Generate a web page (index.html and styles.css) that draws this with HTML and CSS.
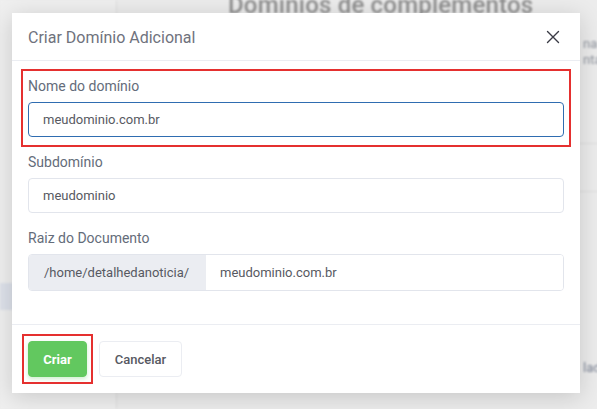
FILE: index.html
```html
<!DOCTYPE html>
<html lang="pt-BR">
<head>
<meta charset="utf-8">
<title>Criar Domínio Adicional</title>
<link rel="stylesheet" href="styles.css">
</head>
<body>
<div class="page" aria-hidden="true">
  <aside class="side">
    <div class="side-item"></div>
  </aside>
  <main class="main">
    <h1 class="page-title">Domínios de complementos</h1>
    <p class="page-text">na<br>nta</p>
    <div class="page-rule r1"></div>
    <div class="page-rule r2"></div>
    <p class="page-text low">lad</p>
  </main>
</div>

<div class="modal">
  <div class="modal-header">
    <h2 class="modal-title">Criar Domínio Adicional</h2>
    <button class="close" type="button" aria-label="Fechar">
      <svg width="14" height="14" viewBox="0 0 14 14"><path d="M1.5 1.5L12.5 12.5M12.5 1.5L1.5 12.5" stroke="#3a3b45" stroke-width="1.4" stroke-linecap="round"/></svg>
    </button>
  </div>
  <div class="modal-body">
    <div class="group marked">
      <label class="label">Nome do domínio</label>
      <input class="input focus" type="text" value="meudominio.com.br">
    </div>
    <div class="group">
      <label class="label">Subdomínio</label>
      <input class="input" type="text" value="meudominio">
    </div>
    <div class="group">
      <label class="label">Raiz do Documento</label>
      <div class="input-group">
        <span class="addon">/home/detalhedanoticia/</span>
        <input class="input inner" type="text" value="meudominio.com.br">
      </div>
    </div>
  </div>
  <div class="modal-footer">
    <span class="mark-btn"><button class="btn btn-success" type="button">Criar</button></span>
    <button class="btn btn-secondary" type="button">Cancelar</button>
  </div>
</div>
</body>
</html>
```

FILE: styles.css
```css
* { box-sizing: border-box; }
html, body { margin: 0; padding: 0; }
body {
  width: 597px;
  height: 409px;
  overflow: hidden;
  background: #eeeeee;
  font-family: Roboto, "Liberation Sans", sans-serif;
  position: relative;
}

/* blurred page behind the modal */
.page {
  display: flex;
  height: 409px;
  filter: blur(1.2px);
}
.side {
  width: 117px;
  flex: none;
  background: #efefef;
  border-right: 1px solid #dedede;
  padding-top: 283px;
}
.side-item {
  height: 27px;
  background: #dde1ea;
}
.main {
  flex: 1;
  background: #ececec;
  position: relative;
}
.page-title {
  margin: -9px 0 0 111px;
  font-size: 24px;
  font-weight: 500;
  color: #8e8e8e;
  line-height: 28px;
  letter-spacing: 0.2px;
  white-space: nowrap;
}
.page-text {
  margin: 17px 0 0 466px;
  font-size: 13px;
  line-height: 16px;
  color: #8f949e;
}
.page-text.low { margin-top: 168px; color: #7d8597; }
.page-rule { height: 1px; background: #dcdcdc; margin-left: 460px; }
.page-rule.r1 { margin-top: 75px; }
.page-rule.r2 { margin-top: 47px; }

/* modal */
.modal {
  position: absolute;
  left: 12px;
  top: 13px;
  width: 568px;
  height: 380px;
  background: #fff;
  box-shadow: 0 4px 22px rgba(0, 0, 0, 0.16);
  display: flex;
  flex-direction: column;
}
.modal-header {
  height: 48px;
  border-bottom: 1px solid #ebedf2;
  display: flex;
  align-items: center;
  justify-content: space-between;
  padding: 0 20px 0 16px;
}
.modal-title {
  margin: 0;
  font-size: 16px;
  font-weight: 400;
  color: #6f727d;
  position: relative;
  top: 1px;
}
.close {
  border: 0;
  background: none;
  padding: 0;
  width: 14px;
  height: 14px;
  display: flex;
  cursor: pointer;
}
.modal-body {
  padding: 16px 16px 1px;
  flex: 1;
}
.group {
  margin-bottom: 16px;
  position: relative;
}
.group.marked::before {
  content: "";
  position: absolute;
  left: -7px;
  right: -7px;
  top: -8px;
  bottom: -10px;
  border: 2px solid #e5302f;
}
.label {
  display: block;
  font-size: 14px;
  line-height: 18px;
  color: #646c7a;
  margin-bottom: 7px;
}
.input {
  display: block;
  width: 100%;
  height: 35px;
  border: 1px solid #e2e5ec;
  border-radius: 4px;
  padding: 0 14px;
  font-family: Roboto, "Liberation Sans", sans-serif;
  font-size: 13px;
  color: #575962;
  background: #fff;
  outline: none;
}
.input.focus { border-color: #2f6db1; }
.input-group {
  display: flex;
  height: 37px;
  border: 1px solid #e2e5ec;
  border-radius: 4px;
  overflow: hidden;
}
.addon {
  flex: none;
  width: 177px;
  background: #ebedf2;
  color: #575962;
  font-size: 13px;
  display: flex;
  align-items: center;
  padding-left: 15px;
}
.input.inner {
  border: 0;
  border-radius: 0;
  height: 35px;
  flex: 1;
}
.modal-footer {
  height: 69px;
  border-top: 1px solid #ebedf2;
  display: flex;
  align-items: flex-start;
  gap: 12px;
  padding: 16px 16px 0;
}
.mark-btn {
  position: relative;
  display: flex;
}
.mark-btn::before {
  content: "";
  position: absolute;
  left: -6px;
  right: -6px;
  top: -7px;
  bottom: -7px;
  border: 2px solid #e5302f;
}
.btn {
  height: 36px;
  border-radius: 4px;
  font-family: Roboto, "Liberation Sans", sans-serif;
  font-size: 13px;
  cursor: pointer;
}
.btn-success {
  width: 59px;
  background: #62c85f;
  border: 1px solid #62c85f;
  color: #fff;
  font-weight: 700;
  box-shadow: 0 2px 4px rgba(98, 200, 95, 0.3);
}
.btn-secondary {
  width: 83px;
  background: #fff;
  border: 1px solid #ebedf2;
  color: #575962;
  font-weight: 500;
}
```
